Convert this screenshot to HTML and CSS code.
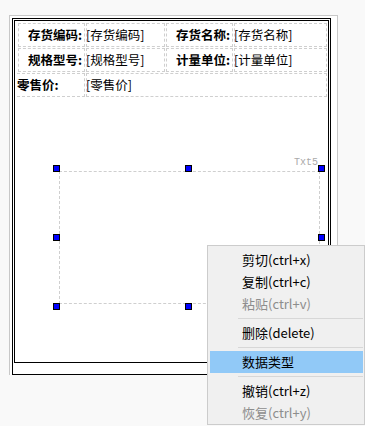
FILE: index.html
```html
<!DOCTYPE html>
<html lang="zh-CN">
<head>
<meta charset="utf-8">
<title>设计器</title>
<link rel="stylesheet" href="styles.css">
</head>
<body>
<div class="frame">
  <div class="page">
    <div class="inner">
      <div class="grid">
        <div class="cell lbl">存货编码:</div>
        <div class="cell val">[存货编码]</div>
        <div class="cell lbl">存货名称:</div>
        <div class="cell val">[存货名称]</div>
        <div class="cell lbl">规格型号:</div>
        <div class="cell val">[规格型号]</div>
        <div class="cell lbl">计量单位:</div>
        <div class="cell val">[计量单位]</div>
        <div class="cell lbl left">零售价:</div>
        <div class="cell val wide">[零售价]</div>
      </div>
      <div class="ctrl">
        <span class="ctrl-name">Txt5</span>
        <span class="h h-tl"></span>
        <span class="h h-tm"></span>
        <span class="h h-tr"></span>
        <span class="h h-ml"></span>
        <span class="h h-mr"></span>
        <span class="h h-bl"></span>
        <span class="h h-bm"></span>
      </div>
    </div>
  </div>
</div>
<div class="menu">
  <div class="item">剪切(ctrl+x)</div>
  <div class="item">复制(ctrl+c)</div>
  <div class="item disabled">粘贴(ctrl+v)</div>
  <div class="sep"></div>
  <div class="item">删除(delete)</div>
  <div class="sep"></div>
  <div class="item active">数据类型</div>
  <div class="sep"></div>
  <div class="item">撤销(ctrl+z)</div>
  <div class="item disabled">恢复(ctrl+y)</div>
</div>
</body>
</html>
```

FILE: styles.css
```css
html, body {
  margin: 0;
  padding: 0;
  background: #f9f9f9;
  font-family: "Noto Sans CJK SC", "Noto Sans", sans-serif;
  color: #000;
}

.frame {
  box-sizing: border-box;
  width: 329px;
  margin: 15px 0 0 9px;
  border: 1px solid #c8c8c8;
  border-bottom: none;
  padding: 2px 6px 0 2px;
  background: #fff;
}

.page {
  border: 1px solid #000;
  padding: 1px 1px 11px 1px;
}

.inner {
  position: relative;
  box-sizing: border-box;
  height: 343px;
  border: 1px solid #000;
  padding: 2px 1px 0 3px;
}

.grid {
  display: grid;
  grid-template-columns: 67px 79px 67px 1fr;
  grid-auto-rows: 24px;
  gap: 1px;
}

.cell {
  box-sizing: border-box;
  border: 1px dashed #cfcfcf;
  font-size: 12.5px;
  line-height: 22px;
  white-space: nowrap;
  overflow: hidden;
}

.lbl {
  font-weight: bold;
  text-align: right;
  padding-right: 2px;
}

.lbl.left {
  text-align: left;
  padding: 0;
  border-left: none;
  margin-left: -1px;
}

.val {
  text-indent: -1px;
}

.wide {
  grid-column: 2 / 5;
}

.ctrl {
  position: absolute;
  left: 44px;
  top: 150px;
  width: 261px;
  height: 133px;
  box-sizing: border-box;
  border: 1px dashed #cfcfcf;
}

.ctrl-name {
  position: absolute;
  right: 1px;
  bottom: 100%;
  margin-bottom: 3px;
  font-family: "Liberation Mono", "DejaVu Sans Mono", monospace;
  font-size: 10px;
  line-height: 12px;
  color: #aaaaaa;
}

.h {
  position: absolute;
  box-sizing: border-box;
  width: 7px;
  height: 7px;
  background: #0000ff;
  border: 1px solid #000;
}

.h-tl { left: -7px; top: -7px; }
.h-tm { left: 125px; top: -7px; }
.h-tr { left: 258px; top: -7px; }
.h-ml { left: -7px; top: 62px; }
.h-mr { left: 258px; top: 62px; }
.h-bl { left: -7px; top: 131px; }
.h-bm { left: 125px; top: 131px; }

.menu {
  position: absolute;
  left: 207px;
  top: 245px;
  width: 158px;
  box-sizing: border-box;
  background: #f0f0f0;
  border: 1px solid #cccccc;
  padding: 3px 0 0 0;
  font-size: 13px;
}

.item {
  height: 22px;
  line-height: 22px;
  padding-left: 32px;
  margin: 0 1px 0 2px;
  color: #000;
}

.item.disabled {
  color: #8d8d8d;
}

.item.active {
  background: #91c9f7;
}

.sep {
  height: 7px;
  position: relative;
}

.sep::after {
  content: "";
  position: absolute;
  left: 30px;
  right: 1px;
  top: 3px;
  height: 1px;
  background: #d7d7d7;
}
```
